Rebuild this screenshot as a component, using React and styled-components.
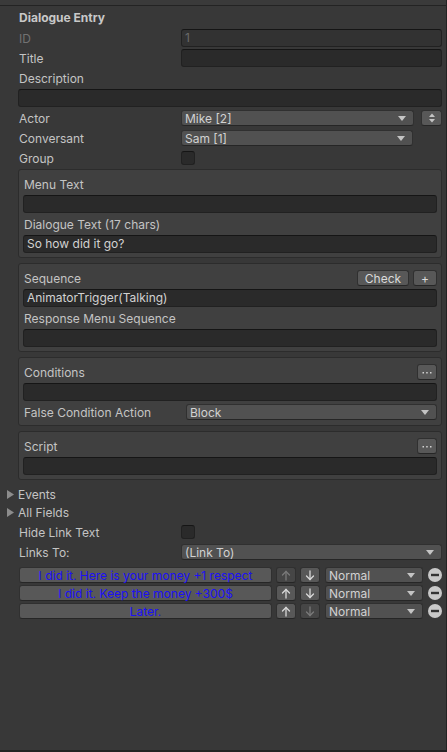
import React from "react";
import styled, { createGlobalStyle } from "styled-components";

const GlobalStyle = createGlobalStyle`
    html, body {
        margin: 0;
        padding: 0;
        background: #383838;
    }
    body {
        font-family: Inter, "Noto Sans", sans-serif;
        font-size: 12px;
        color: #c4c4c4;
    }
`;

const Window = styled.div`
    width: 447px;
    height: 752px;
    box-sizing: border-box;
    background: #383838;
    border-right: 1px solid #232323;
    border-bottom: 2px solid #232323;
    margin-right: 1px;
    overflow: hidden;
    display: flex;
    flex-direction: column;
`;

const TopStrip = styled.div`
    height: 5px;
    flex-shrink: 0;
    background: #3a3a3a;
    border-bottom: 1px solid #232323;
`;

const Content = styled.div`
    padding: 2px 4px 0 18px;
    display: flex;
    flex-direction: column;
`;

const Header = styled.div`
    height: 20px;
    line-height: 20px;
    padding-left: 1px;
    font-weight: 700;
    color: #c8c8c8;
`;

const Row = styled.div`
    display: flex;
    align-items: center;
    height: ${({ $h }) => $h || 20}px;
    gap: ${({ $gap }) => $gap || 0}px;
`;

const Spacer = styled.div`
    height: ${({ $h }) => $h}px;
    flex-shrink: 0;
`;

const Label = styled.div`
    width: ${({ $w }) => $w || 163}px;
    flex-shrink: 0;
    padding-left: ${({ $pad }) => $pad ?? 1}px;
    box-sizing: border-box;
    color: ${({ $disabled }) => ($disabled ? "#727272" : "#c4c4c4")};
    white-space: nowrap;
`;

const Grow = styled.div`
    flex: 1;
`;

const TextField = styled.div`
    flex: 1;
    height: 18px;
    box-sizing: border-box;
    background: ${({ $disabled }) => ($disabled ? "#323232" : "#2a2a2a")};
    border: 1px solid #212121;
    border-top-color: #151515;
    border-radius: 3px;
    padding: 0 3px;
    line-height: 16px;
    color: ${({ $disabled }) => ($disabled ? "#6a6a6a" : "#d2d2d2")};
    white-space: nowrap;
    overflow: hidden;
`;

const Dropdown = styled.div`
    flex: ${({ $w }) => ($w ? "none" : 1)};
    width: ${({ $w }) => ($w ? `${$w}px` : "auto")};
    height: 16px;
    box-sizing: border-box;
    background: #515151;
    border: 1px solid #303030;
    border-bottom-color: #262626;
    border-radius: 3px;
    margin-left: ${({ $ml }) => $ml || 0}px;
    padding: 0 7px 0 3px;
    display: flex;
    align-items: center;
    justify-content: space-between;
    color: #d2d2d2;
    font-size: 12px;
`;

const SmallButton = styled.div`
    width: ${({ $w }) => $w || 20}px;
    height: 16px;
    flex-shrink: 0;
    box-sizing: border-box;
    background: ${({ $off }) => ($off ? "#464646" : "#585858")};
    border: 1px solid #303030;
    border-bottom-color: #262626;
    border-radius: 3px;
    display: flex;
    align-items: center;
    justify-content: center;
    color: #dadada;
    font-size: 12px;
`;

const Checkbox = styled.div`
    width: 14px;
    height: 14px;
    box-sizing: border-box;
    background: #2a2a2a;
    border: 1px solid #212121;
    border-top-color: #151515;
    border-radius: 3px;
`;

const Box = styled.div`
    margin-top: ${({ $mt }) => $mt ?? 5}px;
    border: 1px solid #2c2c2c;
    border-radius: 3px;
    background: #404040;
    padding: 4px 4px 3px 4px;
    display: flex;
    flex-direction: column;
`;

const Foldout = styled.div`
    height: 18px;
    display: flex;
    align-items: center;
    margin-left: -11px;
    gap: 4px;
`;

const LinkButton = styled.div`
    width: 253px;
    height: 16px;
    flex-shrink: 0;
    box-sizing: border-box;
    background: #585858;
    border: 1px solid #303030;
    border-bottom-color: #262626;
    border-radius: 3px;
    display: flex;
    align-items: center;
    justify-content: center;
    color: #1c10f6;
    white-space: nowrap;
    margin-left: 1px;
`;

const RemoveSlot = styled.span`
    display: flex;
    margin-left: 1px;
`;

const Arrow = () => (
    <svg width="8" height="5" viewBox="0 0 8 5">
        <polygon points="0,0 8,0 4,5" fill="#c4c4c4" />
    </svg>
);

const UpDown = () => (
    <svg width="8" height="10" viewBox="0 0 8 10">
        <polygon points="1,4 7,4 4,0.5" fill="#c4c4c4" />
        <polygon points="1,6 7,6 4,9.5" fill="#c4c4c4" />
    </svg>
);

const Triangle = () => (
    <svg width="7" height="9" viewBox="0 0 7 9">
        <polygon points="0,0 7,4.5 0,9" fill="#8c8c8c" />
    </svg>
);

const ArrowLine = ({ down, off }) => (
    <svg width="10" height="11" viewBox="0 0 10 11" style={{ transform: down ? "rotate(180deg)" : "none" }}>
        <g stroke={off ? "#7a7a7a" : "#d8d8d8"} strokeWidth="1.3" fill="none" strokeLinecap="round">
            <line x1="5" y1="1.5" x2="5" y2="10" />
            <polyline points="1.5,5 5,1.5 8.5,5" />
        </g>
    </svg>
);

const Minus = () => (
    <svg width="14" height="14" viewBox="0 0 14 14">
        <circle cx="7" cy="7" r="7" fill="#c8c8c8" />
        <rect x="3" y="5.8" width="8" height="2.4" fill="#333333" />
    </svg>
);

const Dots = () => (
    <svg width="10" height="3" viewBox="0 0 10 3">
        <rect x="0.5" y="1" width="1.5" height="1.5" fill="#d2d2d2" />
        <rect x="4.2" y="1" width="1.5" height="1.5" fill="#d2d2d2" />
        <rect x="8" y="1" width="1.5" height="1.5" fill="#d2d2d2" />
    </svg>
);

const links = [
    { text: "I did it. Here is your money +1 respect", up: false, down: true },
    { text: "I did it. Keep the money +300$", up: true, down: true },
    { text: "Later.", up: true, down: false },
];

const App = () => {
    return (
        <>
            <GlobalStyle />
            <Window>
                <TopStrip />
                <Content>
                    <Header>Dialogue Entry</Header>
                    <Row>
                        <Label $disabled>ID</Label>
                        <TextField $disabled>1</TextField>
                    </Row>
                    <Row>
                        <Label>Title</Label>
                        <TextField />
                    </Row>
                    <Row>
                        <Label>Description</Label>
                    </Row>
                    <Row>
                        <TextField />
                    </Row>
                    <Row $gap={7}>
                        <Label $w={156}>Actor</Label>
                        <Dropdown>
                            Mike [2]
                            <Arrow />
                        </Dropdown>
                        <SmallButton $w={21}>
                            <UpDown />
                        </SmallButton>
                    </Row>
                    <Row>
                        <Label>Conversant</Label>
                        <Dropdown $w={232}>
                            Sam [1]
                            <Arrow />
                        </Dropdown>
                    </Row>
                    <Row>
                        <Label>Group</Label>
                        <Checkbox />
                    </Row>

                    <Box $mt={1}>
                        <Row>
                            <Label>Menu Text</Label>
                        </Row>
                        <Row>
                            <TextField />
                        </Row>
                        <Row>
                            <Label>Dialogue Text (17 chars)</Label>
                        </Row>
                        <Row>
                            <TextField>So how did it go?</TextField>
                        </Row>
                    </Box>

                    <Box>
                        <Row $gap={4}>
                            <Label>Sequence</Label>
                            <Grow />
                            <SmallButton $w={52}>Check</SmallButton>
                            <SmallButton $w={24}>+</SmallButton>
                        </Row>
                        <Row>
                            <TextField>AnimatorTrigger(Talking)</TextField>
                        </Row>
                        <Row>
                            <Label>Response Menu Sequence</Label>
                        </Row>
                        <Row>
                            <TextField />
                        </Row>
                    </Box>

                    <Box>
                        <Row>
                            <Label>Conditions</Label>
                            <Grow />
                            <SmallButton>
                                <Dots />
                            </SmallButton>
                        </Row>
                        <Row>
                            <TextField />
                        </Row>
                        <Row>
                            <Label>False Condition Action</Label>
                            <Dropdown>
                                Block
                                <Arrow />
                            </Dropdown>
                        </Row>
                    </Box>

                    <Box>
                        <Row>
                            <Label>Script</Label>
                            <Grow />
                            <SmallButton>
                                <Dots />
                            </SmallButton>
                        </Row>
                        <Row>
                            <TextField />
                        </Row>
                    </Box>

                    <Spacer $h={5} />
                    <Foldout>
                        <Triangle />
                        <span>Events</span>
                    </Foldout>
                    <Foldout>
                        <Triangle />
                        <span>All Fields</span>
                    </Foldout>
                    <Spacer $h={1} />
                    <Row>
                        <Label>Hide Link Text</Label>
                        <Checkbox />
                    </Row>
                    <Row>
                        <Label>Links To:</Label>
                        <Dropdown>
                            (Link To)
                            <Arrow />
                        </Dropdown>
                    </Row>
                    <Spacer $h={4} />
                    {links.map((l) => (
                        <Row key={l.text} $h={18} $gap={4}>
                            <LinkButton>{l.text}</LinkButton>
                            <SmallButton $off={!l.up}>
                                <ArrowLine off={!l.up} />
                            </SmallButton>
                            <SmallButton $off={!l.down}>
                                <ArrowLine down off={!l.down} />
                            </SmallButton>
                            <Dropdown $w={98} $ml={1}>
                                Normal
                                <Arrow />
                            </Dropdown>
                            <RemoveSlot>
                                <Minus />
                            </RemoveSlot>
                        </Row>
                    ))}
                </Content>
            </Window>
        </>
    );
};

export default App;
